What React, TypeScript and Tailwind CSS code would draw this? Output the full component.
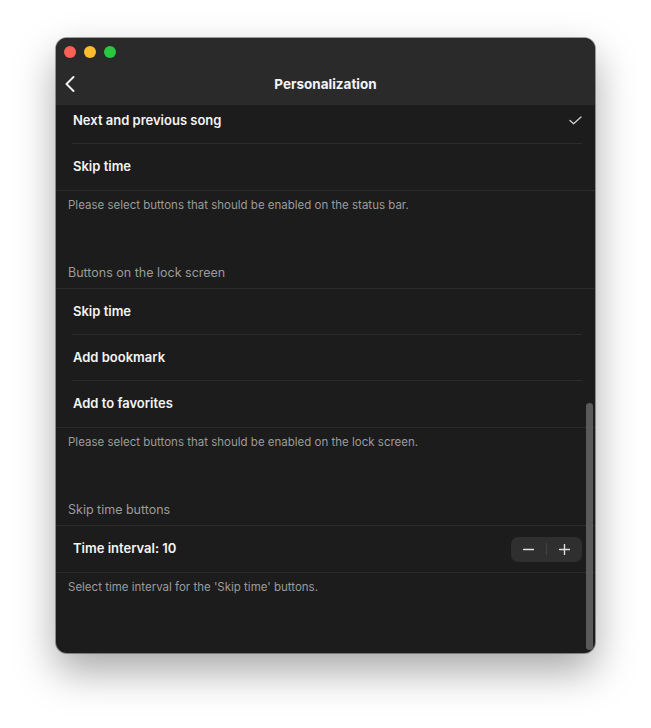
import React from 'react'

type Row = { label: string; checked?: boolean; stepper?: boolean }

type Section = {
  header?: string
  rows: Row[]
  footer: string
}

const sections: Section[] = [
  {
    rows: [{ label: 'Next and previous song', checked: true }, { label: 'Skip time' }],
    footer: 'Please select buttons that should be enabled on the status bar.',
  },
  {
    header: 'Buttons on the lock screen',
    rows: [{ label: 'Skip time' }, { label: 'Add bookmark' }, { label: 'Add to favorites' }],
    footer: 'Please select buttons that should be enabled on the lock screen.',
  },
  {
    header: 'Skip time buttons',
    rows: [{ label: 'Time interval: 10', stepper: true }],
    footer: "Select time interval for the 'Skip time' buttons.",
  },
]

function Check() {
  return (
    <svg width="13" height="9" viewBox="0 0 13 9" fill="none">
      <path d="M1 4.5 L4.6 7.8 L12 1" stroke="#d0d0d0" strokeWidth="1.3" strokeLinecap="round" strokeLinejoin="round" />
    </svg>
  )
}

function Stepper() {
  return (
    <div className="flex h-[25px] w-[71px] items-center rounded-[7px] bg-[#2f2f2f]">
      <button className="flex h-full flex-1 items-center justify-center">
        <svg width="11" height="11" viewBox="0 0 11 11">
          <path d="M0.5 5.5 H10.5" stroke="#e0e0e0" strokeWidth="1.4" strokeLinecap="round" />
        </svg>
      </button>
      <div className="h-[12px] w-px bg-[#444]" />
      <button className="flex h-full flex-1 items-center justify-center">
        <svg width="11" height="11" viewBox="0 0 11 11">
          <path d="M0.5 5.5 H10.5 M5.5 0.5 V10.5" stroke="#e0e0e0" strokeWidth="1.4" strokeLinecap="round" />
        </svg>
      </button>
    </div>
  )
}

function SettingsSection({ section, first }: { section: Section; first: boolean }) {
  return (
    <div className={first ? '-mt-[7px]' : 'mt-[54px]'}>
      {section.header && (
        <div className="border-b border-[#2c2c2c] pb-[8px] pl-[12px] text-[12.5px] leading-[14px] text-[#9b9b9b]">
          {section.header}
        </div>
      )}
      <div className="border-b border-[#2c2c2c]">
        {section.rows.map((row, i) => {
          const last = i === section.rows.length - 1
          return (
            <div key={row.label} className="pl-[12px] pr-[13px]">
              <div
                className={
                  'ml-[4px] flex h-[46px] items-center justify-between pl-[1px] ' +
                  (last ? '' : 'border-b border-[#2c2c2c]')
                }
              >
                <span className="text-[13px] font-semibold text-[#f4f4f4]">{row.label}</span>
                {row.checked && <Check />}
                {row.stepper && <Stepper />}
              </div>
            </div>
          )
        })}
      </div>
      <p className="pl-[12px] pt-[7px] text-[11.5px] leading-[14px] text-[#9b9b9b]">{section.footer}</p>
    </div>
  )
}

export default function App() {
  return (
    <div
      className="min-h-[728px] w-full bg-white pl-[56px] pt-[38px]"
      style={{ fontFamily: 'Inter, "Noto Sans", sans-serif' }}
    >
      <div className="relative flex h-[615px] w-[539px] flex-col overflow-hidden rounded-[11px] bg-[#1c1c1c] shadow-[0_0_0_1px_rgba(0,0,0,0.35),0_18px_40px_rgba(0,0,0,0.35)]">
        {/* title bar */}
        <div className="relative h-[67px] shrink-0 bg-[#2a2a2a]">
          <div className="flex gap-[8px] pl-[8px] pt-[8px]">
            <span className="h-[12px] w-[12px] rounded-full bg-[#fe5f57]" />
            <span className="h-[12px] w-[12px] rounded-full bg-[#febc2e]" />
            <span className="h-[12px] w-[12px] rounded-full bg-[#28c840]" />
          </div>
          <div className="mt-[17px] flex h-[18px] items-center">
            <button className="pl-[9px]">
              <svg width="10" height="16" viewBox="0 0 10 16" fill="none">
                <path d="M8.5 1 L1.5 8 L8.5 15" stroke="#f2f2f2" strokeWidth="1.9" strokeLinecap="round" strokeLinejoin="round" />
              </svg>
            </button>
            <span className="flex-1 pr-[19px] text-center text-[13.5px] font-bold text-[#f4f4f4]">Personalization</span>
          </div>
        </div>

        {/* content */}
        <div className="relative flex-1 overflow-hidden">
          {sections.map((s, i) => (
            <SettingsSection key={i} section={s} first={i === 0} />
          ))}
          <div className="absolute bottom-[3px] right-[2px] h-[247px] w-[7px] rounded-full bg-[#5a5a5a]" />
        </div>
      </div>
    </div>
  )
}
